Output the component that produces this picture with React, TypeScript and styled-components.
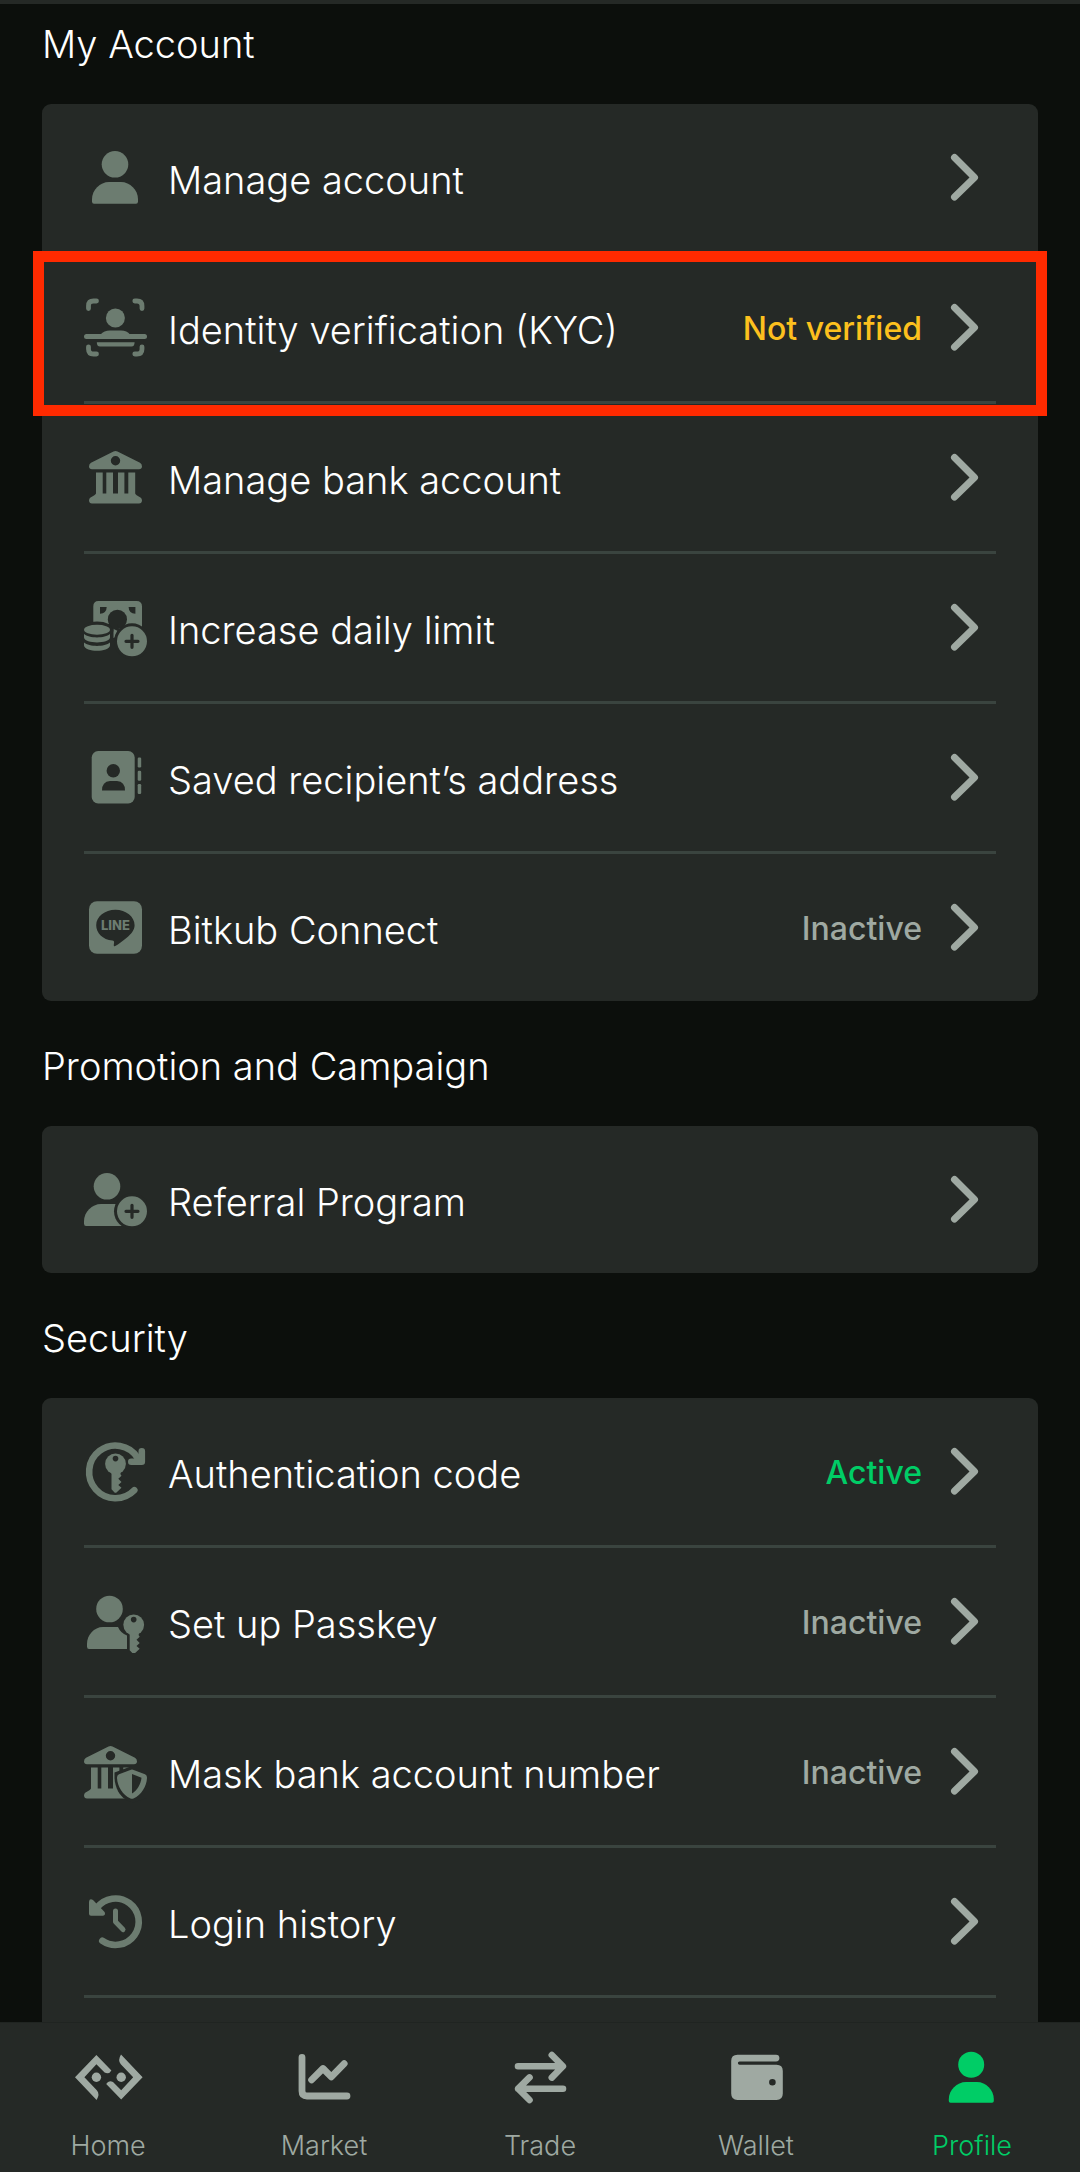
import React from "react";
import styled, { createGlobalStyle } from "styled-components";

const color = {
  page: "#0c0f0c",
  surface: "#252926",
  line: "#3a443f",
  icon: "#6c7c70",
  muted: "#9fa9a2",
  text: "#ffffff",
  active: "#00cd66",
  warning: "#fcc01e",
  highlight: "#ff2a00",
};

const GlobalStyle = createGlobalStyle`
  * { box-sizing: border-box; }
  body {
    margin: 0;
    background: ${color.page};
    color: ${color.text};
    font-family: Inter, "Liberation Sans", sans-serif;
    font-weight: 300;
  }
`;

const Screen = styled.div`
  display: flex;
  flex-direction: column;
  height: 100vh;
`;

const Content = styled.main`
  flex: 1;
  min-height: 0;
  display: flex;
  flex-direction: column;
  overflow-y: auto;
  scrollbar-width: none;
  border-top: 4px solid ${color.surface};
  padding: 16px 42px 0;
`;

const Section = styled.section<{ $open?: boolean }>`
  display: flex;
  flex-direction: column;
  flex: ${(p) => (p.$open ? "1 0 auto" : "none")};

  & + & {
    margin-top: 41px;
  }
`;

const Heading = styled.h2`
  margin: 0 0 36px;
  font-size: 38px;
  line-height: 48px;
  font-weight: 300;
`;

const Card = styled.ul<{ $open?: boolean }>`
  flex: 1;
  margin: 0;
  padding: 0 42px;
  list-style: none;
  background: ${color.surface};
  border-radius: ${(p) => (p.$open ? "9px 9px 0 0" : "9px")};
`;

const Item = styled.li<{ $divider: boolean }>`
  position: relative;
  border-bottom: ${(p) => (p.$divider ? `3px solid ${color.line}` : "none")};
`;

const Highlight = styled.span`
  position: absolute;
  inset: -3px -51px -15px;
  border: 11px solid ${color.highlight};
  z-index: 1;
  pointer-events: none;
`;

const RowLink = styled.a`
  display: flex;
  align-items: center;
  height: 147px;
  color: inherit;
  text-decoration: none;
`;

const RowIcon = styled.svg`
  flex: none;
  width: 63px;
  height: 63px;
  fill: ${color.icon};
`;

const Label = styled.span`
  flex: 1;
  padding: 4px 0 0 21px;
  font-size: 38px;
  line-height: 48px;
`;

const Status = styled.span<{ $tone: string }>`
  padding: 3px 11px 0 0;
  font-size: 32px;
  line-height: 42px;
  font-weight: 500;
  color: ${(p) => p.$tone};
`;

const ChevronIcon = styled.svg`
  flex: none;
  width: 63px;
  height: 63px;
  fill: none;
  stroke: ${color.muted};
  stroke-width: 7;
  stroke-linecap: round;
  stroke-linejoin: round;
`;

const TabBar = styled.nav`
  display: grid;
  grid-template-columns: repeat(5, 1fr);
  flex: none;
  background: ${color.surface};
  border-top: 1px solid #202421;
  padding: 27px 0 8px;
`;

const Tab = styled.a<{ $current?: boolean }>`
  display: flex;
  flex-direction: column;
  align-items: center;
  gap: 24px;
  font-size: 27px;
  line-height: 36px;
  text-decoration: none;
  color: ${(p) => (p.$current ? color.active : color.muted)};
`;

const TabIcon = styled.svg`
  width: 72px;
  height: 54px;
  fill: currentColor;
`;

const Strokes = styled.g<{ $width: number }>`
  fill: none;
  stroke: currentColor;
  stroke-width: ${(p) => p.$width};
  stroke-linecap: round;
  stroke-linejoin: round;
`;

const IconStrokes = styled(Strokes)`
  stroke: ${color.icon};
`;

const CutStrokes = styled(Strokes)`
  stroke: ${color.surface};
`;

const LineWord = styled.text`
  font-size: 13px;
  font-weight: 800;
  text-anchor: middle;
`;

const PersonArt = () => (
  <>
    <circle cx="31" cy="18.3" r="13.3" />
    <path d="M25 36 H37 C46 36 54 44 54 53 V55.5 Q54 57.7 52 57.7 H10 Q8 57.7 8 55.5 V53 C8 44 16 36 25 36 Z" />
  </>
);

const ScanArt = () => (
  <>
    <IconStrokes $width={4.8}>
      <path d="M4.5 12.5 V10 Q4.5 5 9.5 5 H12.5" />
      <path d="M50.8 5 H53 Q58 5 58 10 V12.5" />
      <path d="M4.5 50.8 V53 Q4.5 58 9.5 58 H12.5" />
      <path d="M50.8 58 H53 Q58 58 58 53 V50.8" />
    </IconStrokes>
    <circle cx="31.4" cy="22" r="9.5" />
    <path d="M16.5 38.5 Q20 34.4 26 34.4 H37 Q43 34.4 46 38.5 Z" />
    <rect x="0" y="38" width="63" height="5" rx="2.5" />
    <path d="M12.8 46.2 H50.6 Q50.6 50.4 47.5 50.4 H16 Q12.8 50.4 12.8 46.2 Z" />
  </>
);

const BankArt = () => (
  <>
    <path
      fillRule="evenodd"
      d="M29.5 5.5 Q31.5 4.4 33.5 5.5 L56 16.8 Q58 18 58 20.5 Q57.8 23.2 55 23.2 H8 Q5.2 23.2 5 20.5 Q5 18 7 16.8 Z M31.5 10.1 a4.7 4.7 0 1 0 0 9.4 a4.7 4.7 0 1 0 0 -9.4 Z"
    />
    <path d="M12 26.5 H18.7 V47.5 H22.3 V26.5 H29 V47.5 H34 V26.5 H40.4 V47.5 H44.3 V26.5 H51.2 V47.5 Q51.5 49 56.5 51.5 Q58 52.5 58 54.5 Q57.8 57.5 55 57.5 H8 Q5.2 57.5 5 54.5 Q5 52.5 6.5 51.5 Q11.5 49 12 47.5 Z" />
  </>
);

const PlusBadge = ({ cy }: { cy: number }) => (
  <>
    <circle cx="48" cy={cy} r="18" fill={color.surface} />
    <circle cx="48" cy={cy} r="15" />
    <CutStrokes $width={3.2}>
      <path d={`M42 ${cy} H54 M48 ${cy - 6} V${cy + 6}`} />
    </CutStrokes>
  </>
);

const MoneyArt = () => (
  <>
    <path d="M14.5 5 H52.5 Q58 5 58 10.5 V32 L31 41.5 L29.5 42 V30 H9.3 V10.5 Q9.3 5 14.5 5 Z" />
    <g fill={color.surface}>
      <circle cx="33.4" cy="23.4" r="9.6" />
      <path d="M16 11 H22.7 Q22.5 17.5 16 17.8 Z M51.4 11 H44.6 Q44.8 17.5 51.4 17.8 Z" />
      <ellipse cx="13" cy="34" rx="16.5" ry="8.5" />
      <path d="M33 28 H24 L29.6 33 L36 36 Z" />
    </g>
    <ellipse cx="13" cy="33.8" rx="13" ry="5" />
    <path d="M0 38 C5 42.5 21 42.5 26 38 V41.5 C25 48 1 48 0 41.5 Z" />
    <path d="M0 46.5 C5 51 21 51 26 46.5 V49.5 C25 56.5 1 56.5 0 49.5 Z" />
    <PlusBadge cy={45.3} />
  </>
);

const AddressArt = () => (
  <>
    <rect x="7.7" y="5" width="43" height="52.4" rx="6.5" />
    <g fill={color.surface}>
      <circle cx="29.3" cy="24.8" r="6.7" />
      <path d="M26 35 H33 Q41 35.5 41 44.5 H18 Q18 35.5 26 35 Z" />
    </g>
    <rect x="53.7" y="11.5" width="3.5" height="10" rx="1.2" />
    <rect x="53.7" y="24.8" width="3.5" height="10" rx="1.2" />
    <rect x="53.7" y="38" width="3.5" height="10" rx="1.2" />
  </>
);

const LineArt = () => (
  <>
    <rect x="5" y="5.2" width="53" height="52.6" rx="8" />
    <path
      fill={color.surface}
      d="M31.4 13.7 C42 13.7 50.6 20.6 50.6 29.2 C50.6 34 47 38 43 41.5 C39 45 34 48.6 30.8 50.3 Q29.6 50.6 29.8 49 C30 47 30.8 45 28.5 44.6 C18.6 43.5 12.2 37 12.2 29.2 C12.2 20.6 20.8 13.7 31.4 13.7 Z"
    />
    <LineWord x="31.4" y="34">
      LINE
    </LineWord>
  </>
);

const ReferralArt = () => (
  <>
    <circle cx="23" cy="18.3" r="13.3" />
    <path d="M17 36 H32 L42 58 H2 Q0 58 0 55.5 V53 C0 44 8 36 17 36 Z" />
    <PlusBadge cy={43.3} />
  </>
);

const KeyArt = ({ x, y }: { x: number; y: number }) => (
  <g transform={`translate(${x} ${y})`}>
    <circle cx="0" cy="0" r="10.4" />
    <path d="M-4 8 H5 V10.5 L6 12 L2.8 15 L6 18.2 L2.8 21.2 L6 24 L1 28.6 Q0 29.2 -1 28.6 L-4 25.5 Z" />
    <circle cx="0" cy="-5.2" r="2.8" fill={color.surface} />
  </g>
);

const AuthArt = () => (
  <>
    <IconStrokes $width={6.6}>
      <path d="M50.3 50.2 A26.3 26.3 0 1 1 53.5 17.6" />
      <path d="M57.8 11.2 V21.7 H47.3" />
    </IconStrokes>
    <path d="M57.8 11.2 V21.7 H47.3 Z" />
    <KeyArt x={31.5} y={23.8} />
  </>
);

const PasskeyArt = () => (
  <>
    <circle cx="25.5" cy="19" r="13.3" />
    <path d="M19 37 H34 Q36.5 43 43 45.5 V59 H5 Q3 59 3 56.5 V54 C3 45 10 37 19 37 Z" />
    <KeyArt x={49.7} y={34.8} />
  </>
);

const MaskArt = () => (
  <>
    <g transform="translate(-5 1)">
      <BankArt />
    </g>
    <path
      d="M48 26 L30.5 32.5 V38 C31 48 36 56 41 59 L48 63 L63 58 V26 Z"
      fill={color.surface}
    />
    <path d="M47 29.8 Q48 29.3 49 29.8 L61 34.3 Q63 35 63 37.5 C62.8 46 57.5 55 49.5 58.5 Q48 59 46.5 58.5 C38.5 55 33.2 46 33 37.5 Q33 35 35 34.3 Z" />
    <path d="M48 34 L57.5 37.8 C57 44 53 50.5 48 53.5 Z" fill={color.surface} />
  </>
);

const HistoryArt = () => (
  <>
    <IconStrokes $width={6.6}>
      <path d="M18.3 50.8 A23.2 23.2 0 1 0 13 17.8" />
    </IconStrokes>
    <path d="M5 11.5 Q5.6 8 9 10 L20.6 22 Q22 25.3 19 25.7 H7 Q5 25.7 5 23.7 Z" />
    <IconStrokes $width={5}>
      <path d="M31.5 21 V31.8 L39 39.6" />
    </IconStrokes>
  </>
);

type RowData = {
  label: string;
  art: () => React.JSX.Element;
  status?: string;
  tone?: string;
  highlighted?: boolean;
};

type SectionData = { title: string; open?: boolean; rows: RowData[] };

const sections: SectionData[] = [
  {
    title: "My Account",
    rows: [
      { label: "Manage account", art: PersonArt },
      {
        label: "Identity verification (KYC)",
        art: ScanArt,
        status: "Not verified",
        tone: color.warning,
        highlighted: true,
      },
      { label: "Manage bank account", art: BankArt },
      { label: "Increase daily limit", art: MoneyArt },
      { label: "Saved recipient’s address", art: AddressArt },
      { label: "Bitkub Connect", art: LineArt, status: "Inactive" },
    ],
  },
  {
    title: "Promotion and Campaign",
    rows: [{ label: "Referral Program", art: ReferralArt }],
  },
  {
    title: "Security",
    open: true,
    rows: [
      {
        label: "Authentication code",
        art: AuthArt,
        status: "Active",
        tone: color.active,
      },
      { label: "Set up Passkey", art: PasskeyArt, status: "Inactive" },
      { label: "Mask bank account number", art: MaskArt, status: "Inactive" },
      { label: "Login history", art: HistoryArt },
    ],
  },
];

const HomeTab = () => (
  <>
    <path d="M3 27.3 L24.4 5 L39.4 20.5 Q37 24.8 32.6 22.6 L24.4 14.3 L12.4 27.3 L24.8 40.3 Q28.2 44 24.6 50 Z" />
    <path d="M70.6 27.3 L49.2 49.6 L34.2 34.1 Q36.6 29.8 41 32 L49.2 40.3 L61.2 27.3 L48.8 14.3 Q45.4 10.6 49 4.6 Z" />
    <circle cx="24.4" cy="27.3" r="4.7" />
    <circle cx="49.2" cy="27.3" r="4.7" />
  </>
);

const MarketTab = () => (
  <Strokes $width={6.8}>
    <path d="M14 7.5 V41 Q14 46 19 46 H59" />
    <path d="M23.6 29.8 L35 18.5 L43.3 26.8 L56.2 13.6" />
  </Strokes>
);

const TradeTab = () => (
  <Strokes $width={6.6}>
    <path d="M14 16.3 H58.7 M47.8 5 L58.9 16.3 L47.8 27.6" />
    <path d="M59 38.7 H14.2 M25.5 27.4 L14.2 38.7 L25.5 50" />
  </Strokes>
);

const WalletTab = () => (
  <path
    fillRule="evenodd"
    d="M17.5 4.7 H56 A3.4 3.4 0 0 1 56 11.5 H19.5 A1.6 1.6 0 0 0 19.5 14.7 H56.5 Q62.8 14.7 62.8 21 V43.5 Q62.8 50 56.5 50 H17.5 Q11.2 50 11.2 43.5 V11 Q11.2 4.7 17.5 4.7 Z M52.4 29 a3.3 3.3 0 1 0 0 6.6 a3.3 3.3 0 1 0 0 -6.6 Z"
  />
);

const ProfileTab = () => (
  <>
    <circle cx="35.2" cy="14.8" r="13" />
    <path d="M30 32 H41 C50 32 57.8 40 57.8 49 V51 Q57.8 52.8 56 52.8 H14.5 Q12.8 52.8 12.8 51 V49 C12.8 40 21 32 30 32 Z" />
  </>
);

const tabs = [
  { label: "Home", art: HomeTab },
  { label: "Market", art: MarketTab },
  { label: "Trade", art: TradeTab },
  { label: "Wallet", art: WalletTab },
  { label: "Profile", art: ProfileTab, current: true },
];

function Row({ row, divider }: { row: RowData; divider: boolean }) {
  const Art = row.art;
  return (
    <Item $divider={divider}>
      <RowLink href="#">
        <RowIcon viewBox="0 0 63 63" aria-hidden="true">
          <Art />
        </RowIcon>
        <Label>{row.label}</Label>
        {row.status && (
          <Status $tone={row.tone ?? color.muted}>{row.status}</Status>
        )}
        <ChevronIcon viewBox="0 0 63 63" aria-hidden="true">
          <path d="M21.5 11.5 L41.5 31.5 L21.5 51" />
        </ChevronIcon>
      </RowLink>
      {row.highlighted && <Highlight />}
    </Item>
  );
}

export default function App() {
  return (
    <Screen>
      <GlobalStyle />
      <Content>
        {sections.map((section) => (
          <Section key={section.title} $open={section.open}>
            <Heading>{section.title}</Heading>
            <Card $open={section.open}>
              {section.rows.map((row, index) => (
                <Row
                  key={row.label}
                  row={row}
                  divider={!!section.open || index < section.rows.length - 1}
                />
              ))}
            </Card>
          </Section>
        ))}
      </Content>
      <TabBar aria-label="Main">
        {tabs.map(({ label, art: Art, current }) => (
          <Tab
            key={label}
            href="#"
            $current={current}
            aria-current={current ? "page" : undefined}
          >
            <TabIcon viewBox="0 0 72 54" aria-hidden="true">
              <Art />
            </TabIcon>
            {label}
          </Tab>
        ))}
      </TabBar>
    </Screen>
  );
}
